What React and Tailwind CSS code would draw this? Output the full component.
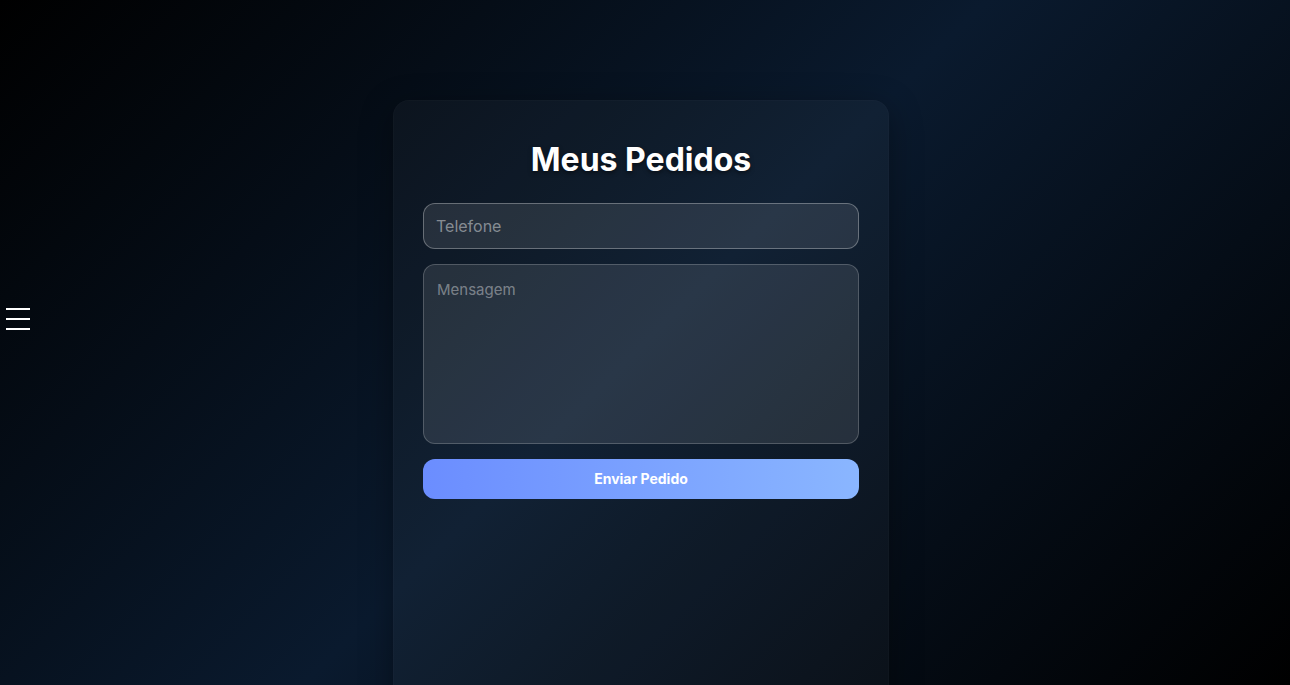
import React from 'react';

const App = () => {
  return (
    <div className="relative h-screen w-full overflow-hidden bg-[linear-gradient(135deg,#000000_0%,#0a1a2e_50%,#000000_100%)] font-['Inter',sans-serif]">
      {/* Menu */}
      <button className="absolute left-[6px] top-[308px] flex w-6 flex-col gap-[8px]">
        <span className="block h-[2px] w-6 bg-white" />
        <span className="block h-[2px] w-6 bg-white" />
        <span className="block h-[2px] w-6 bg-white" />
      </button>

      <div className="flex justify-center pt-[100px] pr-[8px]">
        <div className="h-[640px] w-[496px] rounded-2xl border border-white/[0.02] bg-white/[0.03] px-[29px] pt-[37px] shadow-[0_8px_32px_rgba(0,0,0,0.35)]">
          <h2 className="mb-[21px] text-center text-[32px] leading-[44px] font-bold text-white [text-shadow:0_2px_4px_rgba(0,0,0,0.5)]">
            Meus Pedidos
          </h2>

          <div className="flex flex-col gap-4">
            <input
              type="text"
              placeholder="Telefone"
              className="h-[46px] w-full rounded-xl border border-white/30 bg-white/10 px-[12px] text-base text-white outline-none placeholder:text-white/45"
            />
            <textarea
              placeholder="Mensagem"
              className="-mt-px h-[180px] w-full resize-none rounded-xl border border-white/20 bg-white/10 px-[13px] py-[14px] text-[15px] text-white outline-none placeholder:text-white/40"
            />
            <button className="-mt-px h-[40px] w-full rounded-xl bg-[linear-gradient(90deg,#6b8dff,#8ab6ff)] text-sm font-bold text-white">
              Enviar Pedido
            </button>
          </div>
        </div>
      </div>
    </div>
  );
};

export default App;
